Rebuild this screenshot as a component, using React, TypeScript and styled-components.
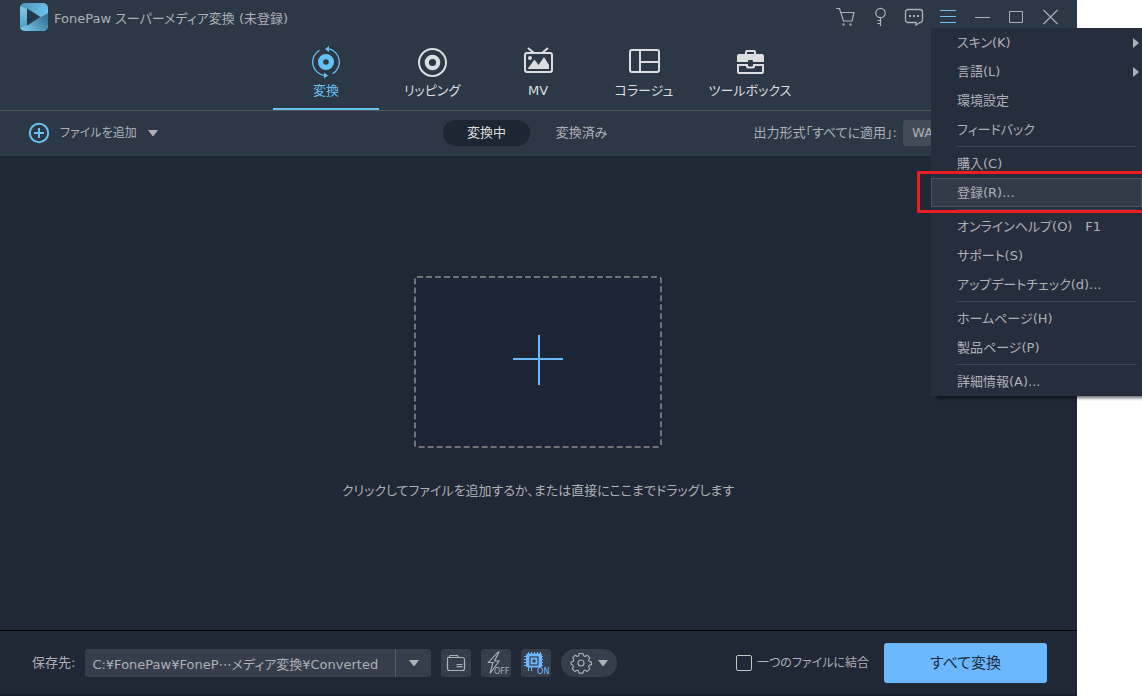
import React from 'react';
import styled, { createGlobalStyle } from 'styled-components';

const c = {
  header: '#2d3847',
  body: '#1f2834',
  pill: '#1c2733',
  field: '#373e4b',
  menu: '#262e3e',
  text: '#adb0b5',
  bright: '#dcdddf',
  accent: '#66c2f2',
  blue: '#6cb8ff',
};

const Global = createGlobalStyle`
  *, *::before, *::after { box-sizing: border-box; }
  body {
    margin: 0;
    background: #fff;
    font-family: "DejaVu Sans", "Noto Sans CJK JP", sans-serif;
    font-size: 13px;
    line-height: 18px;
    font-feature-settings: "palt";
  }
  button, select, input { font: inherit; font-feature-settings: inherit; color: inherit; }
  button { margin: 0; padding: 0; border: 0; background: none; cursor: pointer; white-space: nowrap; }
  svg { display: block; flex: none; }
`;

const Page = styled.div`
  position: relative;
  min-height: 100vh;
  padding-right: 65px;
  overflow: hidden;
`;

const Window = styled.div`
  display: flex;
  flex-direction: column;
  min-height: 100vh;
  background: ${c.body};
  color: ${c.text};
`;

const TitleBar = styled.header`
  display: flex;
  align-items: center;
  height: 34px;
  padding: 0 10px 0 20px;
  background: ${c.header};
`;

const Title = styled.h1`
  flex: 1;
  margin: 3px 0 0 6px;
  font-size: 13px;
  font-weight: inherit;
`;

const WindowButton = styled.button<{ $active?: boolean }>`
  display: flex;
  align-items: center;
  justify-content: center;
  width: 34px;
  height: 34px;
  color: ${(p) => (p.$active ? '#74bdf5' : c.text)};
`;

const Tabs = styled.nav`
  display: flex;
  justify-content: center;
  padding-right: 1px;
  background: ${c.header};
  border-bottom: 1px solid #55575d;
`;

const Tab = styled.button<{ $active?: boolean }>`
  display: flex;
  flex-direction: column;
  align-items: center;
  gap: 4px;
  width: 106px;
  height: 76px;
  padding-top: 12px;
  border-bottom: 2px solid ${(p) => (p.$active ? c.accent : 'transparent')};
  color: ${(p) => (p.$active ? c.accent : c.bright)};
`;

const Toolbar = styled.div`
  display: grid;
  grid-template-columns: 1fr auto 1fr;
  align-items: center;
  height: 45px;
  padding: 0 30px 1px 21px;
  background: ${c.header};
`;

const AddButton = styled.button`
  display: flex;
  align-items: center;
  justify-self: start;
  gap: 10px;
  padding-left: 7px;
  font-size: 12px;
`;

const Switch = styled.div`
  display: flex;
  gap: 8px;
`;

const SwitchButton = styled.button<{ $active?: boolean }>`
  width: 87px;
  height: 26px;
  border-radius: 13px;
  background: ${(p) => (p.$active ? c.pill : 'transparent')};
  color: ${(p) => (p.$active ? c.bright : c.text)};
`;

const Format = styled.label`
  display: flex;
  align-items: center;
  justify-self: end;
  gap: 6px;
  white-space: nowrap;
`;

const FormatSelect = styled.select`
  appearance: none;
  width: 144px;
  height: 26px;
  padding: 0 9px;
  border: 0;
  border-radius: 3px;
  background: #434a58;
`;

const Main = styled.main`
  flex: 1;
  display: flex;
  flex-direction: column;
  align-items: center;
  justify-content: center;
  gap: 34px;
  padding: 0 1px 10px 0;
`;

const DropZone = styled.button`
  background: #1d2635;
`;

const Hint = styled.p`
  margin: 0;
  font-size: 13px;
`;

const Footer = styled.footer`
  display: flex;
  align-items: center;
  justify-content: space-between;
  height: 66px;
  padding: 0 30px 0 32px;
  border-top: 1px solid #000;
  border-bottom: 2px solid #1a1e2b;
`;

const FooterGroup = styled.div`
  display: flex;
  align-items: center;
  gap: 10px;
`;

const PathBox = styled.div`
  display: flex;
  width: 346px;
  border-radius: 3px;
  background: ${c.field};
`;

const PathInput = styled.input`
  flex: 1;
  min-width: 0;
  height: 28px;
  padding: 2px 7px 0;
  border: 0;
  border-right: 1px solid #565c67;
  background: none;
`;

const PathArrow = styled.button`
  display: flex;
  align-items: center;
  justify-content: center;
  width: 35px;
`;

const ToolButton = styled.button<{ $round?: boolean }>`
  display: flex;
  align-items: center;
  justify-content: center;
  gap: 5px;
  position: relative;
  width: ${(p) => (p.$round ? 56 : 30)}px;
  height: 28px;
  border-radius: ${(p) => (p.$round ? 14 : 3)}px;
  background: ${c.field};
`;

const StateTag = styled.span<{ $on?: boolean }>`
  position: absolute;
  right: 2px;
  bottom: 1px;
  font: 8px/8px "DejaVu Sans", sans-serif;
  color: ${(p) => (p.$on ? c.blue : c.text)};
`;

const Merge = styled.label`
  display: flex;
  align-items: center;
  gap: 5px;
  font-size: 12px;
  white-space: nowrap;
`;

const Check = styled.input`
  appearance: none;
  width: 16px;
  height: 16px;
  margin: 0;
  border: 1px solid #c2c4c6;
  border-radius: 2px;
`;

const ConvertButton = styled.button`
  width: 163px;
  height: 40px;
  margin-left: 5px;
  border-radius: 3px;
  background: ${c.blue};
  color: #1c2c40;
  font-size: 15px;
`;

const Menu = styled.ul`
  position: absolute;
  top: 28px;
  right: 0;
  width: 211px;
  margin: 0;
  padding: 0;
  list-style: none;
  background: ${c.menu};
  color: ${c.text};
  box-shadow: 5px 3px 3px -1px rgba(0, 0, 0, 0.6);
`;

const MenuRow = styled.li`
  position: relative;
`;

const MenuButton = styled.button<{ $active?: boolean }>`
  display: flex;
  align-items: center;
  width: 100%;
  height: 29px;
  padding: 1px 2px 0 25px;
  border: 1px solid ${(p) => (p.$active ? '#4b5360' : 'transparent')};
  background: ${(p) => (p.$active ? '#333b49' : 'transparent')};
  text-align: left;
`;

const Shortcut = styled.kbd`
  margin-left: auto;
  margin-right: 38px;
  font-family: inherit;
  font-size: inherit;
`;

const SubArrow = styled.svg`
  margin-left: auto;
`;

const Divider = styled.li`
  height: 5px;
  padding: 2px 5px 2px 25px;

  &::before {
    content: '';
    display: block;
    height: 1px;
    background: #3c4453;
  }
`;

const Callout = styled.div`
  position: absolute;
  z-index: 1;
  inset: -7px 0 -6px -14px;
  border: 3px solid #ed1c24;
  border-right: 0;
  pointer-events: none;
`;

const Down = () => (
  <svg width="12" height="8" viewBox="0 0 12 8" fill="currentColor">
    <path d="M1 1h10L6.500 7h-1z" />
  </svg>
);

const Logo = () => (
  <svg width="28" height="28" viewBox="0 0 28 28">
    <defs>
      <linearGradient id="logoTop" x1="0" y1="0" x2="1" y2="0.4">
        <stop offset="0" stopColor="#4a90b4" />
        <stop offset="1" stopColor="#6fc6ee" />
      </linearGradient>
      <linearGradient id="logoSide" x1="0" y1="0" x2="0" y2="1">
        <stop offset="0" stopColor="#7ccbee" />
        <stop offset="1" stopColor="#4a9bc4" />
      </linearGradient>
      <linearGradient id="logoBase" x1="0" y1="1" x2="1" y2="0.4">
        <stop offset="0" stopColor="#7bd0f6" />
        <stop offset="1" stopColor="#3a7896" />
      </linearGradient>
      <clipPath id="logoShape"><rect width="28" height="28" rx="5" /></clipPath>
    </defs>
    <g clipPath="url(#logoShape)">
      <rect width="28" height="28" fill="url(#logoTop)" />
      <path d="M0 3L7 6v18L0 26z" fill="url(#logoSide)" />
      <path d="M0 25L7 22L28 10v18H0z" fill="url(#logoBase)" />
      <path d="M7 5.500l13.500 8.500L7 22.500z" fill="#23384b" />
    </g>
  </svg>
);

const line = { fill: 'none', stroke: 'currentColor' };

const CartIcon = () => (
  <svg width="20" height="20" viewBox="0 0 20 20" {...line} strokeWidth="1.2">
    <path d="M0 1.500h3.500l4 12.500h8.500L18 5.500H5" />
    <path d="M6.500 16.500h2v2h-2zM13.500 16.500h2v2h-2z" fill="currentColor" stroke="none" />
  </svg>
);
const KeyIcon = () => (
  <svg width="12" height="20" viewBox="0 0 12 20" {...line} strokeWidth="1.200">
    <circle cx="6.500" cy="6" r="4.700" />
    <path d="M6.500 10.700V19M6.500 13.500H3.500M6.500 16.500H3.500" />
  </svg>
);
const ChatIcon = () => (
  <svg width="20" height="20" viewBox="0 0 20 20" {...line} strokeWidth="1.300">
    <path d="M4 2.500h12a2.500 2.500 0 0 1 2.500 2.500v8a2.500 2.500 0 0 1-2.500 2.500l-4 2.500v-2.500H4A2.500 2.500 0 0 1 1.500 13V5A2.500 2.500 0 0 1 4 2.500z" />
    <path d="M5 8h2v2H5zM9 8h2v2H9zM13 8h2v2h-2z" fill="currentColor" stroke="none" />
  </svg>
);
const MenuIcon = () => (
  <svg width="16" height="14" viewBox="0 0 16 14" {...line}><path d="M0 .5h16M0 6.500h16M0 12.500h16" /></svg>
);
const MinIcon = () => (
  <svg width="16" height="14" viewBox="0 0 16 14" {...line}><path d="M1 7.500h15" /></svg>
);
const MaxIcon = () => (
  <svg width="14" height="12" viewBox="0 0 14 12" {...line}><path d="M.5.5h13v11H.5z" /></svg>
);
const CloseIcon = () => (
  <svg width="16" height="16" viewBox="0 0 16 16" {...line} strokeWidth="1.100"><path d="M1.500 1l14 14M15.500 1l-14 14" /></svg>
);

const ConvertIcon = () => (
  <svg width="32" height="32" viewBox="0 0 32 32" {...line}>
    <circle cx="16" cy="16" r="5.400" strokeWidth="5.200" />
    <path d="M18 2.700A13.500 13.500 0 0 1 22.500 27.800M14 29.300A13.500 13.500 0 0 1 9.500 4.200" strokeWidth="1.300" />
    <path d="M15 3l4-3v6zM18 29.500l-4-3v6z" fill="currentColor" stroke="none" />
  </svg>
);
const RipIcon = () => (
  <svg width="32" height="32" viewBox="0 0 32 32" {...line}>
    <circle cx="16.500" cy="16.500" r="13.500" strokeWidth="2" />
    <circle cx="16.500" cy="16.500" r="5.700" strokeWidth="4.200" />
  </svg>
);
const MvIcon = () => (
  <svg width="32" height="32" viewBox="0 0 32 32" {...line} strokeWidth="2">
    <rect x="3" y="7" width="27" height="19" rx="2" />
    <path d="M6 2l6 5M26 2l-6 5" />
    <path d="M5.500 23l7-9.500 4 5.500 5.500-8 5 8v4z" fill="currentColor" stroke="none" />
    <circle cx="8" cy="12" r="2" fill="currentColor" stroke="none" />
  </svg>
);
const CollageIcon = () => (
  <svg width="32" height="32" viewBox="0 0 32 32" {...line} strokeWidth="2">
    <rect x="2" y="4" width="29" height="22" rx="2" />
    <path d="M12 4v22M12 16h19" />
  </svg>
);
const ToolboxIcon = () => (
  <svg width="32" height="32" viewBox="0 0 32 32" fill="currentColor">
    <path d="M11 8V6a2 2 0 0 1 2-2h7a2 2 0 0 1 2 2v2h6a2 2 0 0 1 2 2v6H19v-1a1 1 0 0 0-1-1h-3a1 1 0 0 0-1 1v1H3v-6a2 2 0 0 1 2-2zm2 0h7V6h-7z" fillRule="evenodd" />
    <path d="M3 18h11v1.500a1 1 0 0 0 1 1h3a1 1 0 0 0 1-1V18h11v8a2 2 0 0 1-2 2H5a2 2 0 0 1-2-2zm2 2v6h23v-6h-7v.500a2 2 0 0 1-2 2h-5a2 2 0 0 1-2-2V20z" fillRule="evenodd" />
  </svg>
);
const AddIcon = () => (
  <svg width="22" height="22" viewBox="0 0 22 22" fill="none" stroke={c.accent} strokeWidth="2">
    <circle cx="11" cy="11" r="9.200" />
    <path d="M11 6v10M6 11h10" />
  </svg>
);

const FolderIcon = () => (
  <svg width="20" height="18" viewBox="0 0 20 18" {...line} strokeWidth="1.200">
    <path d="M1.500 3.500V14.500a2 2 0 0 0 2 2h13a2 2 0 0 0 2-2V5.500a2 2 0 0 0-2-2h-4l-1-2H4l-1 2H1.500M3 3.500h10M10.500 10.500h6M10.500 12.700h6" />
  </svg>
);
const BoltIcon = () => (
  <svg width="28" height="28" viewBox="0 0 28 28" {...line} strokeWidth="1.100">
    <path d="M16 3L6.500 13.500h4.500L8 24.500l9-12.500h-4.500L17 3z" />
  </svg>
);
const ChipIcon = () => (
  <svg width="28" height="28" viewBox="0 0 28 28" {...line}>
    <path d="M6.500 3v19M9.500 3v19M12.500 3v15M15.500 3v15M18.500 3v15M2 7.500h19M2 10.500h19M2 13.500h19M2 16.500h19" stroke={c.blue} />
    <rect x="4" y="4.500" width="16" height="14" rx="2" fill={c.blue} stroke="none" />
    <rect x="8" y="8" width="8" height="8" stroke={c.field} strokeWidth="1.200" />
    <rect x="10.500" y="10.500" width="3" height="3" fill={c.field} stroke="none" />
  </svg>
);
const GearIcon = () => (
  <svg width="22" height="22" viewBox="0 0 22 22" {...line} strokeWidth="1.100">
    <circle cx="11" cy="11" r="3" />
    <path d="M9 1.500h4l.6 2.300 1.500.6 2.100-1.200 2.600 2.600-1.200 2.100.6 1.500 2.300.6v2.600l-2.300.6-.6 1.500 1.200 2.100-2.600 2.600-2.100-1.200-1.500.6-.6 2.300H9l-.6-2.300-1.500-.6-2.100 1.200-2.600-2.600 1.200-2.100-.6-1.500L1 12V10l2.300-.6.6-1.500-1.200-2.100 2.600-2.600 2.100 1.200 1.500-.6z" strokeLinejoin="round" />
  </svg>
);

type Item = { label: string; sub?: boolean; keys?: string; active?: boolean };
const groups: Item[][] = [
  [{ label: 'スキン(K)', sub: true }, { label: '言語(L)', sub: true }, { label: '環境設定' }, { label: 'フィードバック' }],
  [{ label: '購入(C)' }, { label: '登録(R)...', active: true }],
  [{ label: 'オンラインヘルプ(O)', keys: 'F1' }, { label: 'サポート(S)' }, { label: 'アップデートチェック(d)...' }],
  [{ label: 'ホームページ(H)' }, { label: '製品ページ(P)' }],
  [{ label: '詳細情報(A)...' }],
];

const tabs = [
  { label: '変換', icon: <ConvertIcon />, active: true },
  { label: 'リッピング', icon: <RipIcon /> },
  { label: 'MV', icon: <MvIcon /> },
  { label: 'コラージュ', icon: <CollageIcon /> },
  { label: 'ツールボックス', icon: <ToolboxIcon /> },
];

const windowButtons = [
  { label: '購入', icon: <CartIcon /> },
  { label: '登録', icon: <KeyIcon /> },
  { label: 'フィードバック', icon: <ChatIcon /> },
  { label: 'メニュー', icon: <MenuIcon />, active: true },
  { label: '最小化', icon: <MinIcon /> },
  { label: '最大化', icon: <MaxIcon /> },
  { label: '閉じる', icon: <CloseIcon /> },
];

export default function App() {
  return (
    <Page lang="ja">
      <Global />
      <Window>
        <TitleBar>
          <Logo />
          <Title>FonePaw スーパーメディア変換 (未登録)</Title>
          {windowButtons.map((b) => (
            <WindowButton key={b.label} aria-label={b.label} $active={b.active}>{b.icon}</WindowButton>
          ))}
        </TitleBar>
        <Tabs>
          {tabs.map((t) => (
            <Tab key={t.label} $active={t.active}>
              {t.icon}
              <span>{t.label}</span>
            </Tab>
          ))}
        </Tabs>
        <Toolbar>
          <AddButton>
            <AddIcon />
            ファイルを追加
            <Down />
          </AddButton>
          <Switch>
            <SwitchButton $active>変換中</SwitchButton>
            <SwitchButton>変換済み</SwitchButton>
          </Switch>
          <Format>
            出力形式「すべてに適用」:
            <FormatSelect defaultValue="WAV"><option>WAV</option></FormatSelect>
          </Format>
        </Toolbar>
        <Main>
          <DropZone aria-label="ファイルを追加">
            <svg width="248" height="172" viewBox="0 0 248 172" fill="none">
              <rect x="1" y="1" width="246" height="170" rx="2" stroke="#8c8c8a" strokeWidth="1.500" strokeDasharray="6 3" />
              <path d="M125 59v50M99 83h50" stroke={c.blue} strokeWidth="2" />
            </svg>
          </DropZone>
          <Hint>クリックしてファイルを追加するか、または直接にここまでドラッグします</Hint>
        </Main>
        <Footer>
          <FooterGroup>
            <label htmlFor="path">保存先:</label>
            <PathBox>
              <PathInput id="path" readOnly value="C:¥FonePaw¥FoneP⋯メディア変換¥Converted" />
              <PathArrow aria-label="保存先を選択"><Down /></PathArrow>
            </PathBox>
            <ToolButton aria-label="フォルダーを開く"><FolderIcon /></ToolButton>
            <ToolButton><BoltIcon /><StateTag>OFF</StateTag></ToolButton>
            <ToolButton><ChipIcon /><StateTag $on>ON</StateTag></ToolButton>
            <ToolButton $round aria-label="設定"><GearIcon /><Down /></ToolButton>
          </FooterGroup>
          <FooterGroup>
            <Merge><Check type="checkbox" />一つのファイルに結合</Merge>
            <ConvertButton>すべて変換</ConvertButton>
          </FooterGroup>
        </Footer>
      </Window>
      <Menu>
        {groups.map((group, i) => (
          <React.Fragment key={i}>
            {i > 0 && <Divider role="separator" />}
            {group.map((item) => (
              <MenuRow key={item.label}>
                <MenuButton $active={item.active}>
                  {item.label}
                  {item.keys && <Shortcut>{item.keys}</Shortcut>}
                  {item.sub && (
                    <SubArrow width="7" height="10" viewBox="0 0 7 10" fill="currentColor"><path d="M1 0l6 5-6 5z" /></SubArrow>
                  )}
                </MenuButton>
                {item.active && <Callout />}
              </MenuRow>
            ))}
          </React.Fragment>
        ))}
      </Menu>
    </Page>
  );
}
